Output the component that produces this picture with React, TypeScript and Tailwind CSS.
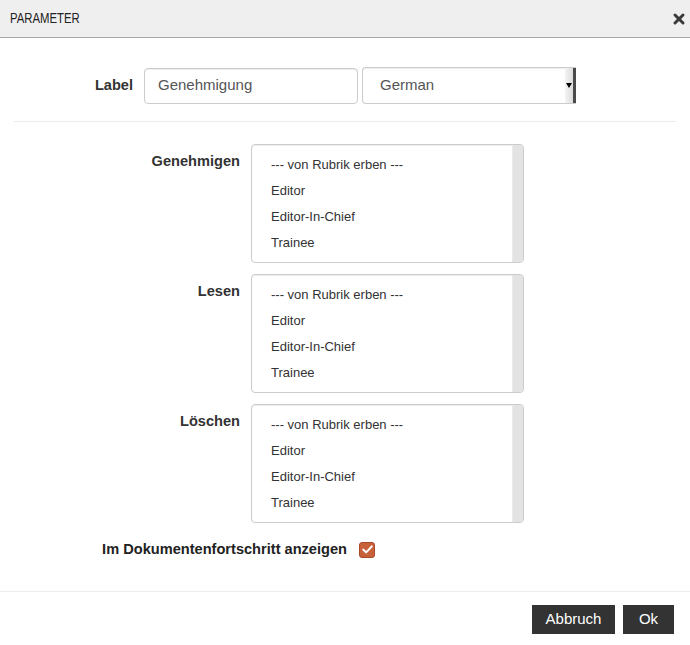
import { X } from 'lucide-react';

const roles = ['--- von Rubrik erben ---', 'Editor', 'Editor-In-Chief', 'Trainee'];

const RoleList = ({ label }: { label: string }) => (
    <div className="flex items-start">
        <div className="w-[240px] text-right text-[14.6px] font-bold text-[#333] pt-[8px] leading-[18px]">{label}</div>
        <div className="ml-[11px] w-[273px] h-[119px] border border-[#ccc] rounded-[4px] bg-white flex overflow-hidden shadow-[inset_0_1px_1px_rgba(0,0,0,0.075)]">
            <ul className="flex-1 pt-[7px] pl-[19px] text-[13px] text-[#333]">
                {roles.map(r => (
                    <li key={r} className="leading-[26px] h-[26px]">{r}</li>
                ))}
            </ul>
            <div className="w-[11px] bg-[#e3e3e3] border-l border-[#eaeaea]" />
        </div>
    </div>
);

export default function App() {
    return (
        <div className="w-[690px] h-[645px] bg-white flex flex-col text-[#333]" style={{ fontFamily: '"Liberation Sans", Arial, sans-serif' }}>
            {/* Header */}
            <div className="h-[38px] flex items-center justify-between px-[10px] bg-[#f0efef] border-b border-[#a9a9a9] flex-shrink-0">
                <span className="inline-block origin-left scale-x-[0.81] text-[14px] text-[#222]">PARAMETER</span>
                <X size={16} strokeWidth={4.5} className="text-[#3a3a3a] -mr-[7px]" />
            </div>

            {/* Label row */}
            <div className="flex items-center pt-[29px] pb-[17px]">
                <div className="w-[133px] text-right text-[14.6px] font-bold">Label</div>
                <div className="ml-[11px] w-[214px] h-[36px] border border-[#ccc] rounded-[4px] flex items-center px-[13px] text-[15px] text-[#555] shadow-[inset_0_1px_1px_rgba(0,0,0,0.075)]">
                    Genehmigung
                </div>
                <div className="ml-[4px] w-[214px] h-[37px] border border-[#ccc] border-r-0 rounded-l-[4px] flex items-center text-[15px] text-[#555] shadow-[inset_0_1px_1px_rgba(0,0,0,0.075)] overflow-hidden">
                    <span className="pl-[17px] flex-1">German</span>
                    <div className="w-[8px] h-full bg-gradient-to-r from-[#f4f4f4] to-[#dcdcdc] flex items-center justify-center">
                        <span className="block w-0 h-0 border-l-[3px] border-r-[3px] border-t-[5px] border-l-transparent border-r-transparent border-t-black" />
                    </div>
                    <div className="w-[3px] h-full bg-[#4a4a4a]" />
                </div>
            </div>

            <div className="mx-[14px] border-t border-[#ececec]" />

            {/* Role lists */}
            <div className="flex flex-col gap-[11px] pt-[22px]">
                <RoleList label="Genehmigen" />
                <RoleList label="Lesen" />
                <RoleList label="Löschen" />
            </div>

            {/* Checkbox row */}
            <div className="flex items-center pt-[16px]">
                <div className="w-[347px] text-right text-[14.6px] font-bold text-[#222]">Im Dokumentenfortschritt anzeigen</div>
                <div className="ml-[12px] w-[16px] h-[16px] rounded-[3px] bg-[#c8603a] border border-[#a94b2a] flex items-center justify-center">
                    <svg width="11" height="9" viewBox="0 0 11 9">
                        <path d="M1.2 4.6 L4.2 7.4 L9.8 1.4" fill="none" stroke="white" strokeWidth="2" strokeLinecap="round" strokeLinejoin="round" />
                    </svg>
                </div>
            </div>

            {/* Footer */}
            <div className="mt-[30px] border-t border-[#ececec] flex justify-end gap-[8px] pt-[13px] pr-[16px]">
                <button className="h-[29px] w-[83px] bg-[#333] text-white text-[15px]">Abbruch</button>
                <button className="h-[29px] w-[51px] bg-[#333] text-white text-[15px]">Ok</button>
            </div>
        </div>
    );
}
